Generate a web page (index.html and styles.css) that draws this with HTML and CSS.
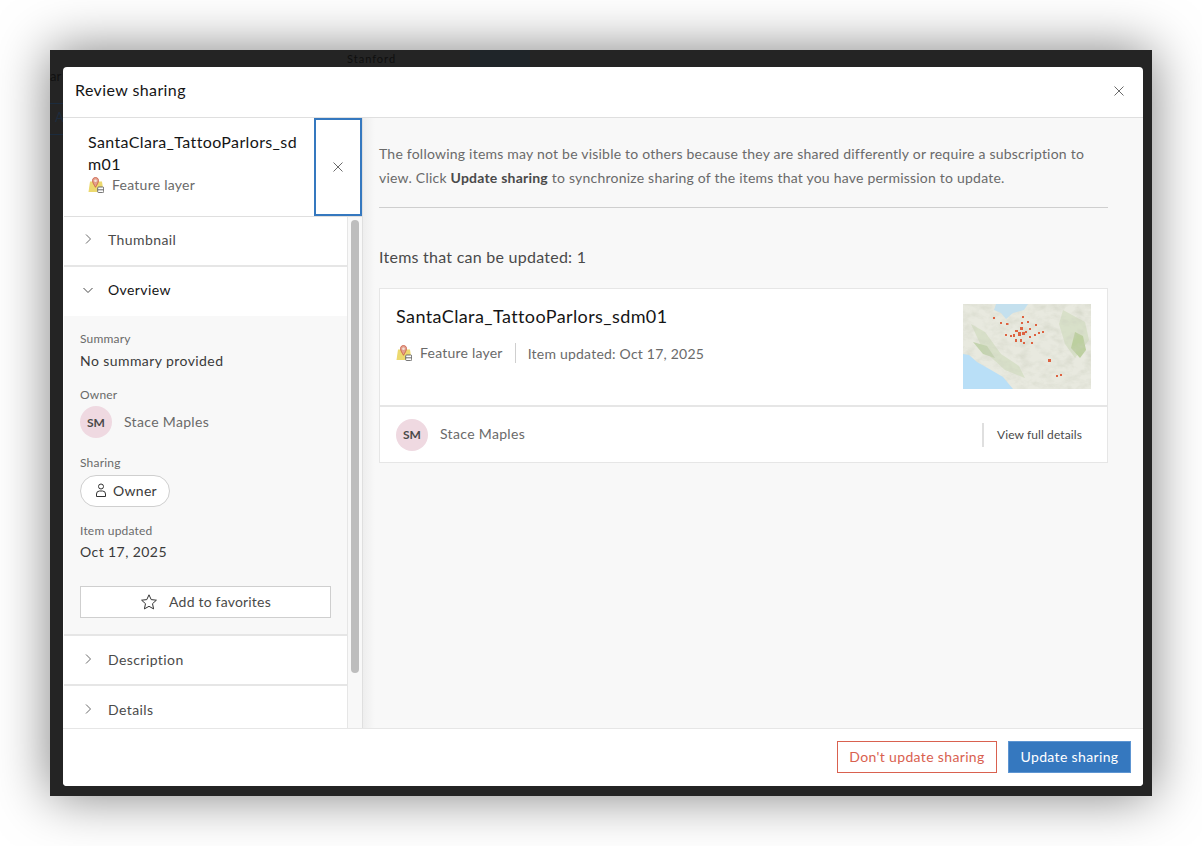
FILE: index.html
```html
<!DOCTYPE html>
<html lang="en">
<head>
<meta charset="utf-8">
<title>Review sharing</title>
<link rel="stylesheet" href="styles.css">
</head>
<body>
<svg width="0" height="0" class="defs">
  <filter id="terrain" x="0" y="0" width="100%" height="100%">
    <feTurbulence type="fractalNoise" baseFrequency="0.09 0.14" numOctaves="4" seed="7"/>
    <feColorMatrix values="0 0 0 0 .6  0 0 0 0 .62  0 0 0 0 .52  .9 .5 0 0 -.6"/>
  </filter>
  <symbol id="layer" viewBox="0 0 16 16">
    <path d="M2 4.500h12l1.500 10.500H.5z" fill="#ecd96f"/>
    <path d="M7.500 .5c-1.900 0-3 1.300-3 3 0 2 1.600 4.300 3 6.800 1.400-2.500 3-4.800 3-6.800 0-1.700-1.100-3-3-3z" fill="#e2a08e" stroke="#c9573f" stroke-width=".8"/>
    <circle cx="7.500" cy="3.700" r="1.300" fill="#f5e3d8"/>
    <rect x="9.700" y="10" width="6" height="5.600" rx="1" fill="#fff" stroke="#6b6b6b"/>
    <path d="M9.700 12.800h6" stroke="#6b6b6b"/>
  </symbol>
  <symbol id="close" viewBox="0 0 16 16">
    <path d="M3.500 3.500l9 9M12.500 3.500l-9 9" fill="none" stroke="#6a6a6a" stroke-width="1"/>
  </symbol>
  <symbol id="right" viewBox="0 0 16 16">
    <path d="M6 3.500l4.500 4.500L6 12.500" fill="none" stroke="#6a6a6a" stroke-width="1"/>
  </symbol>
  <symbol id="down" viewBox="0 0 16 16">
    <path d="M3.500 6l4.500 4.500L12.500 6" fill="none" stroke="#4a4a4a" stroke-width="1"/>
  </symbol>
</svg>
<div class="window">
  <span class="bg-label bg-stanford">Stanford</span>
  <span class="bg-label bg-ar">ar</span>
  <span class="bg-tab">A</span>
  <div class="bg-water"></div>
  <div class="dialog">
    <header class="dialog-head">
      <h1 class="dialog-title">Review sharing</h1>
      <button class="icon-btn"><svg class="icon16"><use href="#close"/></svg></button>
    </header>
    <div class="dialog-body">
      <aside class="side">
        <div class="side-head">
          <div class="side-info">
            <div class="side-name">SantaClara_TattooParlors_sdm01</div>
            <div class="type-row"><svg class="icon16"><use href="#layer"/></svg><span>Feature layer</span></div>
          </div>
          <button class="side-close"><svg class="icon16"><use href="#close"/></svg></button>
        </div>
        <div class="side-scroll">
          <div class="acc-list">
            <div class="acc-row"><svg class="icon16"><use href="#right"/></svg><span>Thumbnail</span></div>
            <div class="acc-row acc-open"><svg class="icon16"><use href="#down"/></svg><span>Overview</span></div>
            <div class="acc-content">
              <div class="field-label">Summary</div>
              <div class="field-value">No summary provided</div>
              <div class="field-label owner-label">Owner</div>
              <div class="owner-row"><span class="avatar">SM</span><span class="owner-name">Stace Maples</span></div>
              <div class="field-label sharing-label">Sharing</div>
              <div class="chip">
                <svg class="icon16" viewBox="0 0 16 16"><circle cx="8" cy="4.500" r="2.500" fill="none" stroke="#333"/><path d="M3.500 14.500v-2.500a3 3 0 0 1 3-3h3a3 3 0 0 1 3 3v2.500z" fill="none" stroke="#333"/></svg>
                <span>Owner</span>
              </div>
              <div class="field-label updated-label">Item updated</div>
              <div class="field-value updated-value">Oct 17, 2025</div>
              <button class="fav-btn">
                <svg class="star" viewBox="0 0 18 18"><path d="M9 1.800l2.200 4.800 5.200.6-3.900 3.500 1.100 5.200L9 13.300l-4.600 2.600 1.100-5.200-3.900-3.500 5.200-.6z" fill="none" stroke="#333" stroke-width="1"/></svg>
                <span>Add to favorites</span>
              </button>
            </div>
            <div class="acc-row acc-desc"><svg class="icon16"><use href="#right"/></svg><span>Description</span></div>
            <div class="acc-row acc-last"><svg class="icon16"><use href="#right"/></svg><span>Details</span></div>
          </div>
          <div class="scroll-track"><div class="scroll-thumb"></div></div>
        </div>
      </aside>
      <main class="main">
        <p class="intro">The following items may not be visible to others because they are shared differently or require a subscription to view. Click <b>Update sharing</b> to synchronize sharing of the items that you have permission to update.</p>
        <h2 class="items-title">Items that can be updated: 1</h2>
        <section class="card">
          <div class="card-top">
            <div class="card-info">
              <div class="card-name">SantaClara_TattooParlors_sdm01</div>
              <div class="card-meta">
                <svg class="icon16"><use href="#layer"/></svg>
                <span class="meta-type">Feature layer</span>
                <span class="meta-updated">Item updated: Oct 17, 2025</span>
              </div>
            </div>
            <svg class="thumb" viewBox="0 0 128 85" preserveAspectRatio="none">
              <rect width="128" height="85" fill="#e8e9df"/>
              <path d="M8 20l14 8 16 22 18 12 6 12-20-8-22-20zM100 6l22 12 4 18-14 18-10-14-6-20z" fill="#d8e0c9"/>
              <path d="M112 28l8 4 3 14-6 8-9-10z" fill="#bccf9f"/>
              <path d="M10 38l14 4 8 12-12-4z" fill="#c3d3ae"/>
              <rect width="128" height="85" filter="url(#terrain)"/>
              <path d="M33 0h32l-4 6-11 3-7 6-5-6-7-3z" fill="#c4e0ee"/>
              <path d="M0 50l6 1 8 7 14 8 12 7 10 12H0z" fill="#b9dff7"/>
              <g fill="#dd6240">
                <rect x="30" y="13" width="2" height="2"/><rect x="37" y="18" width="2" height="2"/><rect x="43" y="19" width="2.500" height="2"/><rect x="58" y="18" width="2" height="2"/><rect x="64" y="17" width="2" height="2"/><rect x="59" y="12" width="2" height="2"/><rect x="72" y="20" width="2" height="2"/><rect x="66" y="24" width="2" height="2"/><rect x="57" y="23" width="3" height="3"/><rect x="52" y="26" width="3" height="2"/><rect x="55" y="28" width="3" height="4"/><rect x="59" y="28" width="3" height="3"/><rect x="50" y="30" width="2" height="3"/><rect x="62" y="27" width="2" height="2"/><rect x="47" y="31" width="2" height="2"/><rect x="42" y="30" width="2" height="2"/><rect x="52" y="35" width="2" height="3"/><rect x="57" y="35" width="2" height="3"/><rect x="66" y="32" width="2" height="2"/><rect x="71" y="30" width="2" height="2"/><rect x="75" y="28" width="2" height="2"/><rect x="79" y="27" width="2" height="2"/><rect x="68" y="38" width="2" height="2"/><rect x="60" y="38" width="2" height="2"/><rect x="85" y="55" width="3" height="3"/><rect x="93" y="71" width="2" height="2"/><rect x="97" y="70" width="2" height="2"/>
              </g>
            </svg>
          </div>
          <div class="card-bottom">
            <span class="avatar">SM</span><span class="owner-name">Stace Maples</span>
            <span class="details-link">View full details</span>
          </div>
        </section>
      </main>
    </div>
    <footer class="dialog-foot">
      <button class="btn btn-danger">Don't update sharing</button>
      <button class="btn btn-primary">Update sharing</button>
    </footer>
  </div>
</div>
</body>
</html>
```
FILE: styles.css
```css
* { box-sizing: border-box; }
html, body { margin: 0; height: 100%; background: #fff; overflow: hidden; }
body { padding: 50px; font-family: Lato, "Open Sans", "Liberation Sans", sans-serif; color: #4a4a4a; }
.defs { position: absolute; }
button { font: inherit; cursor: pointer; }
h1, h2, p { margin: 0; font-weight: 400; }
.icon16 { width: 16px; height: 16px; flex: none; display: block; }

.window {
  position: relative;
  height: 746px;
  padding: 17px 9px 10px 13px;
  background: #242424;
  box-shadow: 0 0 50px rgba(0, 0, 0, .5);
}
.bg-label { position: absolute; color: #0f0f0f; font-size: 11px; letter-spacing: 1px; }
.bg-stanford { left: 297px; top: 2px; }
.bg-ar { left: 0; top: 18px; font-size: 13px; letter-spacing: 0; color: #111; }
.bg-tab { position: absolute; left: 0; top: 53px; width: 13px; height: 32px; padding: 5px 0 0 5px; font-size: 13px; color: #1d2c3e; border-top: 1px solid #1b2b3d; border-bottom: 1px solid #1b2b3d; }
.bg-water { position: absolute; left: 420px; top: 0; width: 60px; height: 17px; background: #1f2529; }

.dialog {
  position: relative;
  height: 100%;
  display: flex;
  flex-direction: column;
  background: #fff;
  border-radius: 4px;
  overflow: hidden;
}
.dialog-head {
  height: 51px;
  flex: none;
  display: flex;
  align-items: center;
  justify-content: space-between;
  padding: 0 16px 2px 12px;
  border-bottom: 1px solid #dfdfdf;
}
.dialog-title { font-size: 16px; line-height: 22px; color: #151515; letter-spacing: .4px; padding-bottom: 2px; }
.icon-btn { border: 0; background: none; padding: 0; }

.dialog-body { flex: 1; min-height: 0; display: flex; }
.side { width: 300px; flex: none; display: flex; flex-direction: column; padding-left: 1px; border-right: 1px solid #dfdfdf; }
.side-head { height: 99px; flex: none; display: flex; border-bottom: 1px solid #dfdfdf; }
.side-info { width: 250px; padding: 13px 16px 0 24px; }
.side-name { font-size: 16px; line-height: 22px; color: #151515; overflow-wrap: anywhere; letter-spacing: .37px; }
.type-row { display: flex; align-items: center; gap: 8px; font-size: 14px; line-height: 20px; color: #6a6a6a; letter-spacing: .25px; }
.side-close { width: 48px; height: 98px; padding: 0; display: flex; align-items: center; justify-content: center; background: #fff; border: 2px solid #3578bf; }

.side-scroll { flex: 1; min-height: 0; display: flex; overflow: hidden; }
.acc-list { flex: 1; min-width: 0; }
.acc-row { height: 50px; display: flex; align-items: center; gap: 12px; padding: 0 0 4px 16px; font-size: 14px; color: #4a4a4a; border-bottom: 2px solid #e6e6e6; background: #fff; letter-spacing: .42px; }
.acc-open { height: 49px; border-bottom: 0; color: #151515; }
.acc-desc { padding-bottom: 2px; }
.acc-last { border-bottom: 0; }
.acc-content { height: 320px; padding: 15px 16px 0; background: #f8f8f8; border-bottom: 2px solid #e6e6e6; }
.field-label { font-size: 12px; line-height: 16px; color: #6a6a6a; letter-spacing: .2px; }
.field-value { font-size: 14px; line-height: 20px; color: #3a3a3a; margin-top: 4px; letter-spacing: .42px; }
.owner-label { margin-top: 16px; }
.owner-row { display: flex; align-items: center; margin-top: 3px; }
.avatar { width: 32px; height: 32px; flex: none; display: flex; align-items: center; justify-content: center; border-radius: 50%; background: #efd9e1; color: #4a4a4a; font-size: 12px; font-weight: 700; }
.owner-name { margin-left: 12px; padding-bottom: 2px; font-size: 14px; color: #6a6a6a; letter-spacing: .33px; }
.sharing-label { margin-top: 17px; }
.chip { width: 90px; height: 32px; margin-top: 4px; display: flex; align-items: center; gap: 4px; padding: 0 0 2px 12px; background: #fff; border: 1px solid #cfcfcf; border-radius: 16px; font-size: 14px; color: #3a3a3a; letter-spacing: .3px; }
.updated-label { margin-top: 16px; }
.field-value.updated-value { margin-top: 3px; }
.fav-btn { width: 251px; height: 32px; margin-top: 24px; display: flex; align-items: center; justify-content: center; gap: 11px; padding: 0 0 1px; background: #fff; border: 1px solid #cfcfcf; font-size: 14px; color: #4a4a4a; letter-spacing: .2px; }
.star { width: 18px; height: 18px; flex: none; }
.scroll-track { width: 15px; flex: none; padding: 3px 3px 0 3px; background: #f8f8f8; border-left: 1px solid #e6e6e6; }
.scroll-thumb { width: 8px; height: 453px; border-radius: 4px; background: #bdbdbd; }

.main { flex: 1; min-width: 0; padding: 24px 35px 0 16px; background: linear-gradient(to right, #eeeeee, #f8f8f8 12px); }
.intro { font-size: 14px; line-height: 24px; color: #6a6a6a; padding-bottom: 17px; border-bottom: 1px solid #cfcfcf; letter-spacing: .22px; }
.intro b { color: #4a4a4a; font-weight: 700; }
.items-title { margin-top: 37px; font-size: 16px; line-height: 24px; color: #4a4a4a; letter-spacing: .25px; }
.card { margin-top: 19px; background: #fff; border: 1px solid #e6e6e6; }
.card-top { height: 118px; display: flex; justify-content: space-between; padding: 15px 16px 0; border-bottom: 2px solid #e6e6e6; }
.card-info { padding-top: 1px; }
.card-name { font-size: 18px; line-height: 22px; color: #151515; letter-spacing: .4px; }
.card-meta { display: flex; align-items: center; margin-top: 16px; font-size: 14px; color: #6a6a6a; letter-spacing: .22px; }
.meta-type { margin-left: 8px; padding-right: 12px; border-right: 1px solid #cfcfcf; line-height: 20px; }
.meta-updated { margin-left: 12px; }
.thumb { width: 128px; height: 85px; flex: none; }
.card-bottom { height: 55px; display: flex; align-items: center; padding: 0 16px; }
.details-link { margin-left: auto; padding: 3px 9px 3px 13px; font-size: 12px; line-height: 18px; color: #4a4a4a; border-left: 2px solid #dfdfdf; letter-spacing: .1px; }

.dialog-foot { height: 58px; flex: none; display: flex; justify-content: flex-end; align-items: flex-start; gap: 11px; padding: 12px 12px 0 0; border-top: 1px solid #e6e6e6; background: #fff; }
.btn { height: 32px; padding: 0 0 2px; font-size: 14px; border: 1px solid; letter-spacing: .35px; }
.btn-danger { width: 160px; background: #fff; color: #d9614f; border-color: #d9614f; }
.btn-primary { width: 123px; background: #3578bf; color: #fff; border-color: #5d95d2; }
```
